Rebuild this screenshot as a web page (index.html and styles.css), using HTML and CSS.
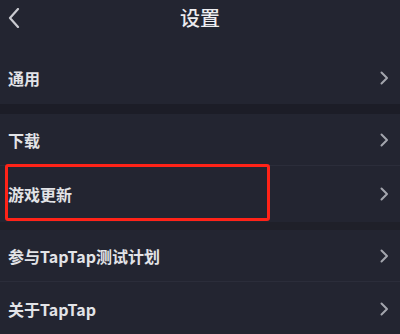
FILE: index.html
```html
<!DOCTYPE html>
<html lang="zh-CN">
<head>
    <meta charset="UTF-8">
    <meta name="viewport" content="width=device-width, initial-scale=1.0">
    <title>设置</title>
    <link rel="stylesheet" href="styles.css">
</head>
<body>
    <header class="top-bar">
        <span class="back-btn">
            <svg width="12" height="20" viewBox="0 0 12 20"><path d="M10 1 L2 10 L10 19" fill="none" stroke="#c9cad0" stroke-width="2.2" stroke-linecap="round" stroke-linejoin="round"/></svg>
        </span>
        <h1>设置</h1>
    </header>

    <div class="settings">
        <div class="group first">
            <div class="row">
                <span>通用</span>
                <svg class="arrow" width="9" height="14" viewBox="0 0 9 14"><path d="M1.5 1.5 L7 7 L1.5 12.5" fill="none" stroke="#a3a5ad" stroke-width="2" stroke-linecap="round" stroke-linejoin="round"/></svg>
            </div>
        </div>

        <div class="gap"></div>

        <div class="group">
            <div class="row">
                <span>下载</span>
                <svg class="arrow" width="9" height="14" viewBox="0 0 9 14"><path d="M1.5 1.5 L7 7 L1.5 12.5" fill="none" stroke="#a3a5ad" stroke-width="2" stroke-linecap="round" stroke-linejoin="round"/></svg>
            </div>
            <div class="row tall highlighted">
                <span>游戏更新</span>
                <svg class="arrow" width="9" height="14" viewBox="0 0 9 14"><path d="M1.5 1.5 L7 7 L1.5 12.5" fill="none" stroke="#a3a5ad" stroke-width="2" stroke-linecap="round" stroke-linejoin="round"/></svg>
                <div class="mark"></div>
            </div>
        </div>

        <div class="gap thin"></div>

        <div class="group">
            <div class="row">
                <span>参与TapTap测试计划</span>
                <svg class="arrow" width="9" height="14" viewBox="0 0 9 14"><path d="M1.5 1.5 L7 7 L1.5 12.5" fill="none" stroke="#a3a5ad" stroke-width="2" stroke-linecap="round" stroke-linejoin="round"/></svg>
            </div>
            <div class="row last">
                <span>关于TapTap</span>
                <svg class="arrow" width="9" height="14" viewBox="0 0 9 14"><path d="M1.5 1.5 L7 7 L1.5 12.5" fill="none" stroke="#a3a5ad" stroke-width="2" stroke-linecap="round" stroke-linejoin="round"/></svg>
            </div>
        </div>
    </div>
</body>
</html>
```

FILE: styles.css
```css
* {
    margin: 0;
    padding: 0;
    box-sizing: border-box;
}

body {
    font-family: "Noto Sans CJK SC", "Noto Sans", sans-serif;
    background-color: #232531;
    color: #e2e3e7;
    width: 400px;
    height: 334px;
    overflow: hidden;
}

.top-bar {
    height: 36px;
    display: flex;
    align-items: center;
    justify-content: center;
    position: relative;
}

.top-bar h1 {
    font-size: 20px;
    font-weight: 500;
    color: #ececef;
    line-height: 1;
}

.back-btn {
    position: absolute;
    left: 8px;
    top: 8px;
    display: flex;
}

.settings {
    display: flex;
    flex-direction: column;
}

.row {
    height: 51px;
    padding: 0 11px 0 8px;
    display: flex;
    align-items: center;
    justify-content: space-between;
    font-size: 16px;
    font-weight: 700;
    position: relative;
}

.row + .row {
    border-top: 1px solid #2b2d3a;
}

.row.last {
    height: 54px;
}

.group.first .row {
    height: 68px;
    padding-top: 16px;
}

.row.tall {
    height: 57px;
}

.gap {
    height: 10px;
    background-color: #1c1d27;
}

.gap.thin {
    height: 8px;
    background-color: #1f2029;
}

.mark {
    position: absolute;
    left: 5px;
    top: -2px;
    width: 265px;
    height: 57px;
    border: 3px solid #ff2318;
    border-radius: 3px;
}
```
